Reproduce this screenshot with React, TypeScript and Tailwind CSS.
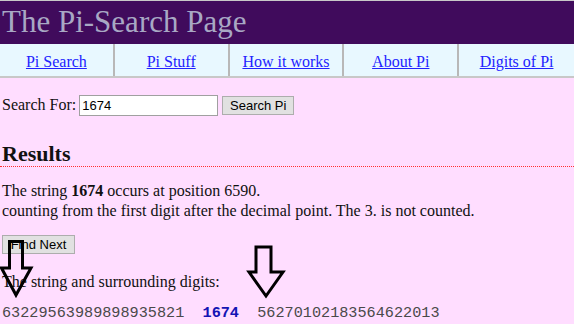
import React from "react";

export default function App() {
  const links = ["Pi Search", "Pi Stuff", "How it works", "About Pi", "Digits of Pi"];
  return (
    <div
      className="relative w-[574px] h-[324px] overflow-hidden bg-[#ffddff] text-[#111] text-[16px]"
      style={{ fontFamily: '"Liberation Serif", "Times New Roman", serif' }}
    >
      <div className="border-t border-[#c8c8c8] bg-[#400b5c] h-[44px] flex items-center px-[2px]">
        <span className="text-[31px] leading-none text-[#a8a8c4] mt-[-2px]">The Pi-Search Page</span>
      </div>
      <div className="grid grid-cols-5 bg-[#e8f8ff] border-b-2 border-[#c8c8c8] h-[34px]">
        {links.map((l, i) => (
          <div
            key={l}
            className={`flex items-center justify-center pt-[3px] ${i < 4 ? "border-r-2 border-[#b8b8b8]" : ""}`}
          >
            <a href="#" className="text-[#2222ff] underline leading-none">
              {l}
            </a>
          </div>
        ))}
      </div>
      <div className="px-[2px]">
        <div className="flex items-center mt-[16px] h-[22px]">
          <span>Search For:</span>
          <input
            defaultValue="1674"
            className="ml-[3px] w-[139px] h-[21px] bg-white border border-[#a0a0a0] px-[2px] text-[13px] text-black outline-none"
            style={{ fontFamily: '"Liberation Sans", Arial, sans-serif' }}
          />
          <button
            className="ml-[4px] w-[72px] h-[19px] bg-[#e1e1e1] border border-[#adadad] text-[13px] text-black leading-none"
            style={{ fontFamily: '"Liberation Sans", Arial, sans-serif' }}
          >
            Search Pi
          </button>
        </div>
        <h2 className="mt-[26px] text-[22px] font-bold leading-[24px]">Results</h2>
        <div className="-mx-[2px] border-t border-dotted border-[#ff3030]" />
        <p className="mt-[14px] leading-[20px]">
          The string <b>1674</b> occurs at position 6590.
          <br />
          counting from the first digit after the decimal point. The 3. is not counted.
        </p>
        <button
          className="mt-[14px] w-[73px] h-[19px] bg-[#e1e1e1] border border-[#adadad] text-[13px] text-black leading-none"
          style={{ fontFamily: '"Liberation Sans", Arial, sans-serif' }}
        >
          Find Next
        </button>
        <p className="mt-[16px] leading-[20px]">The string and surrounding digits:</p>
        <div
          className="mt-[12px] text-[15.2px] leading-[18px] whitespace-pre text-[#4a4a4a]"
          style={{ fontFamily: '"Liberation Mono", "Courier New", monospace' }}
        >
          63229563989898935821{"  "}
          <b className="text-[#1414b4]">1674</b>
          {"  "}56270102183564622013
        </div>
      </div>
      <svg className="absolute left-0 top-0 w-[574px] h-[324px] pointer-events-none" viewBox="0 0 574 324" fill="none">
        <path d="M9.5 241.5 H22.5 V268 H31 L16 295 L1.5 268 H9.5 Z" stroke="#000" strokeWidth="3" />
        <path d="M256 247 H271 V272 H283 L266 296 L249 272 H256 Z" stroke="#000" strokeWidth="3" />
      </svg>
    </div>
  );
}
